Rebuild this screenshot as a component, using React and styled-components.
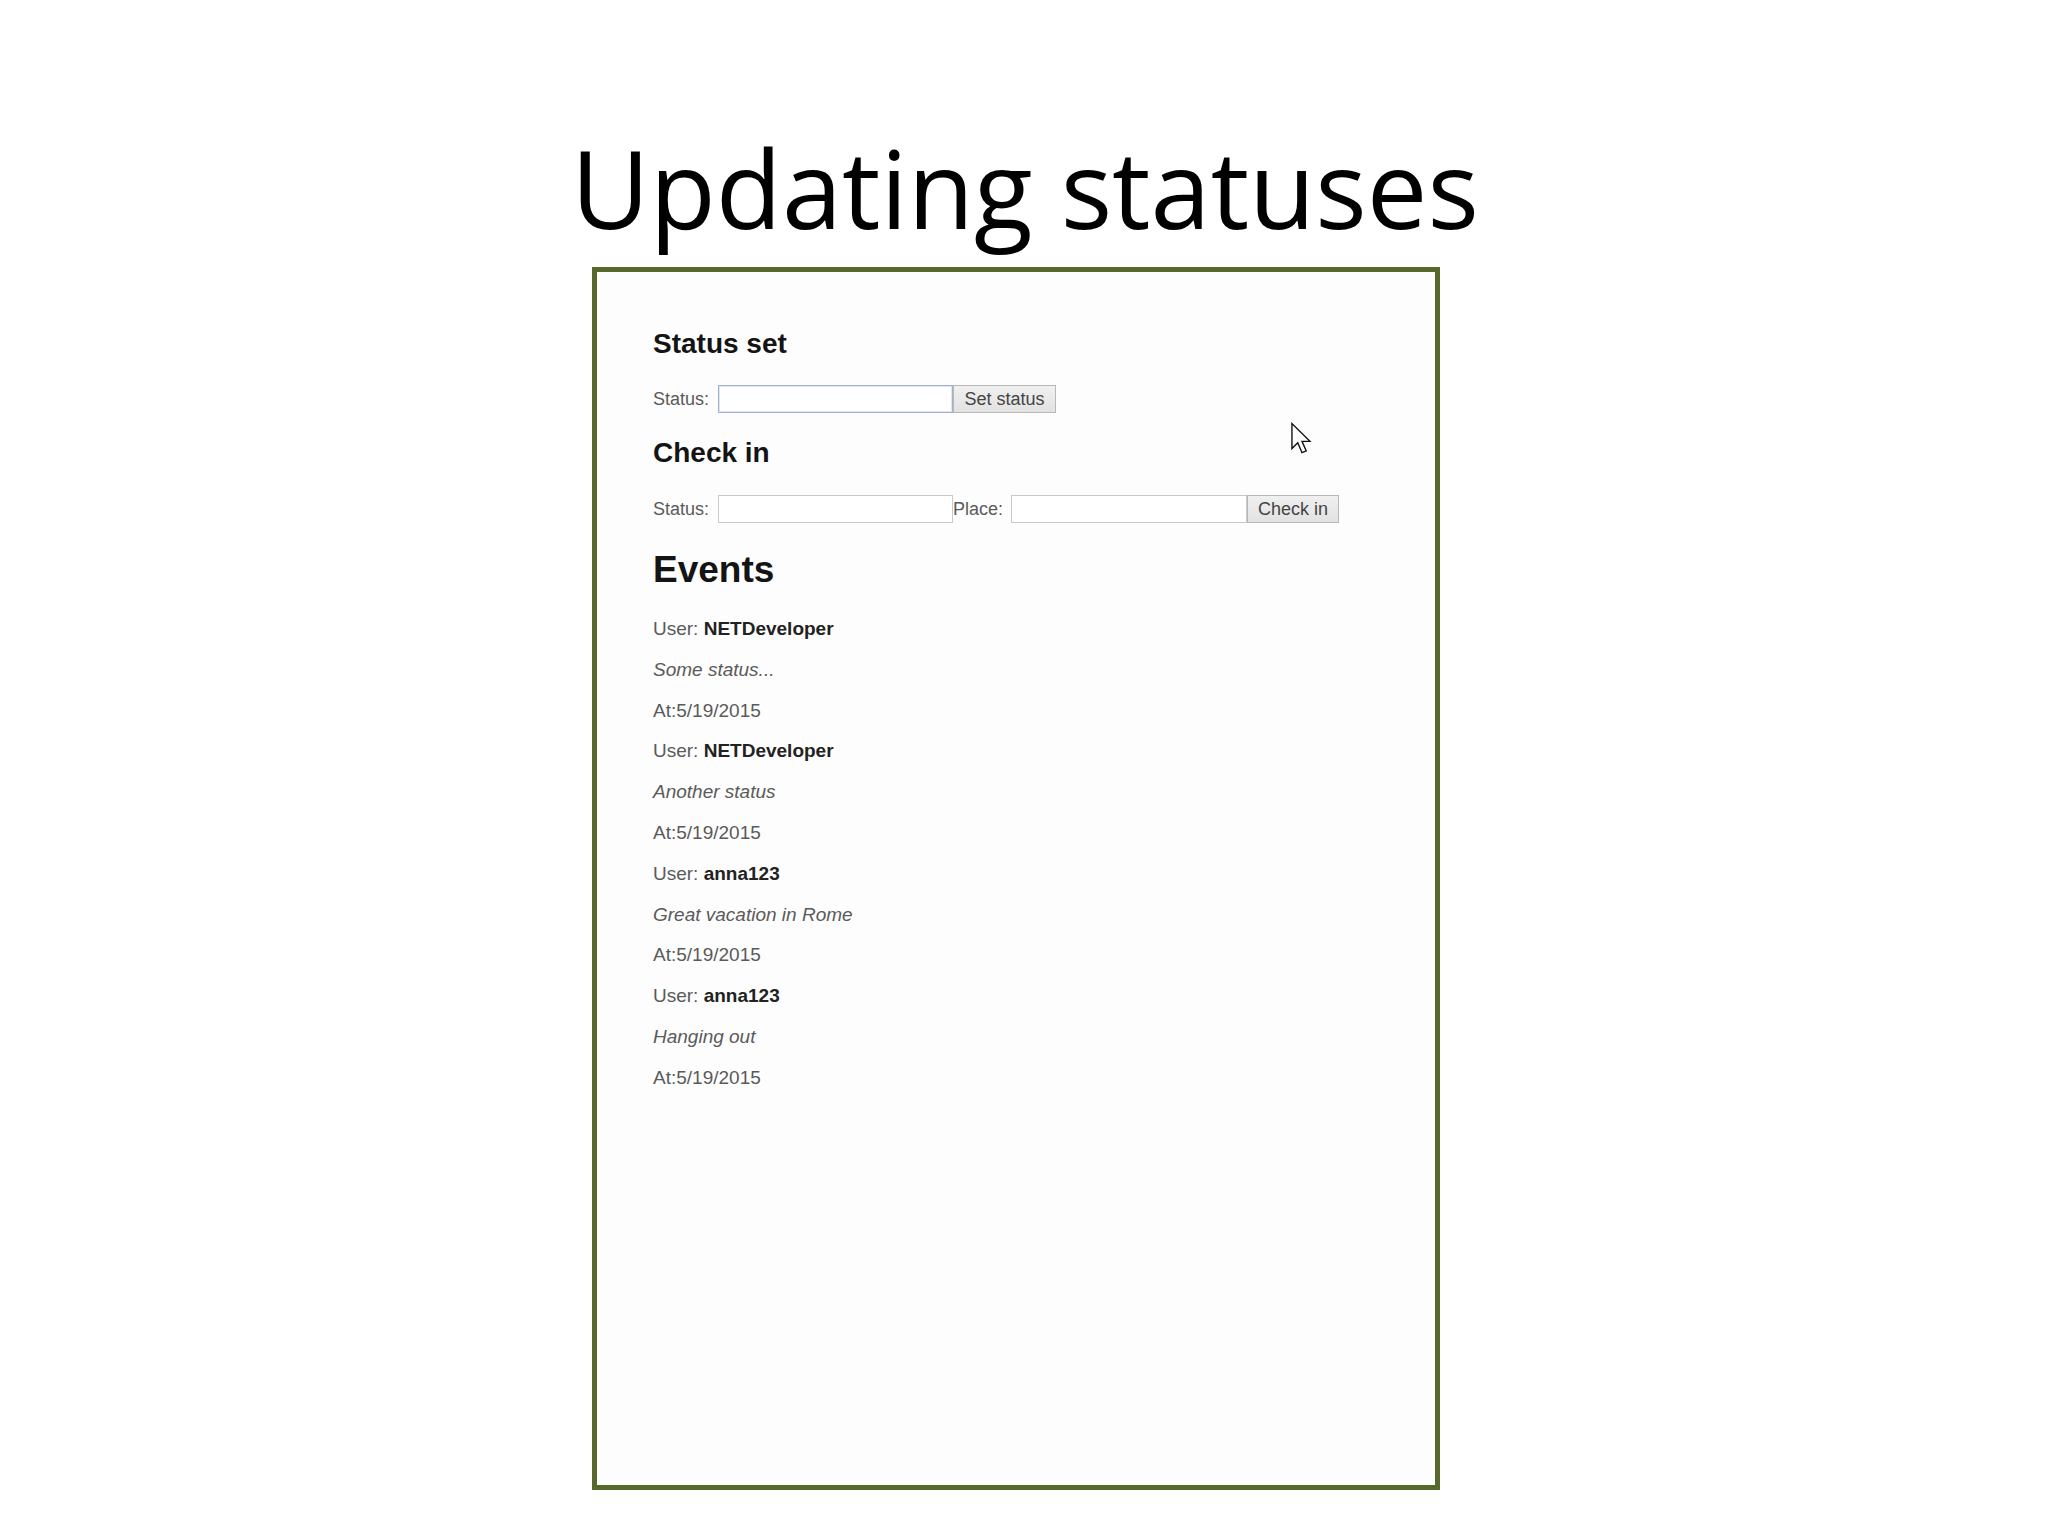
import React from "react";
import styled, { createGlobalStyle } from "styled-components";

const Global = createGlobalStyle`
  html, body { margin: 0; padding: 0; background: #ffffff; }
  #root { width: 2048px; height: 1536px; }
`;

const Slide = styled.div`
  width: 2048px;
  height: 1536px;
  background: #ffffff;
  display: flex;
  flex-direction: column;
  overflow: hidden;
`;

const Title = styled.h1`
  margin: 134px 0 0 0;
  font-family: "Open Sans", "Noto Sans", sans-serif;
  font-weight: 400;
  font-size: 108px;
  line-height: 108px;
  color: #000000;
  text-align: center;
  padding-left: 2px;
`;

const Frame = styled.div`
  position: relative;
  box-sizing: border-box;
  margin: 25px 0 0 592px;
  width: 848px;
  height: 1223px;
  border: 5px solid #56682a;
  background: #fdfdfd;
  padding: 56px 0 0 56px;
  font-family: "Liberation Sans", Arial, sans-serif;
  display: flex;
  flex-direction: column;
`;

const Heading = styled.h2`
  margin: 0;
  font-size: ${(p) => (p.$large ? "37px" : "28px")};
  line-height: ${(p) => (p.$large ? "42px" : "32px")};
  font-weight: 700;
  color: #141414;
`;

const FormRow = styled.div`
  display: flex;
  align-items: center;
  height: 28px;
  margin: ${(p) => (p.$loose ? "26px 0 26px 0" : "25px 0 24px 0")};
`;

const Label = styled.span`
  font-size: 18px;
  color: #5a5a5a;
  margin-right: ${(p) => p.$gap || 9}px;
`;

const TextInput = styled.input`
  box-sizing: border-box;
  width: ${(p) => p.$w || 235}px;
  height: 28px;
  margin: 0;
  padding: 0 4px;
  border: 1px solid ${(p) => (p.$focused ? "#9fb2d2" : "#c9c9c9")};
  box-shadow: ${(p) => (p.$focused ? "inset 0 0 0 1px #dde5f2" : "none")};
  background: #ffffff;
  outline: none;
  font-family: "Liberation Sans", Arial, sans-serif;
  font-size: 18px;
`;

const Button = styled.button`
  box-sizing: border-box;
  width: ${(p) => p.$w}px;
  height: 28px;
  margin: 0;
  padding: 0;
  border: 1px solid #b8b8b8;
  background: linear-gradient(#f0f0f0, #e2e2e2);
  color: #444444;
  font-family: "Liberation Sans", Arial, sans-serif;
  font-size: 18px;
  line-height: 26px;
`;

const EventList = styled.div`
  margin-top: 18px;
  display: flex;
  flex-direction: column;
`;

const EventLine = styled.div`
  font-size: 19px;
  line-height: 40.8px;
  color: #5a5a5a;
  font-style: ${(p) => (p.$italic ? "italic" : "normal")};
`;

const Name = styled.b`
  color: #222222;
`;

const Pointer = styled.svg`
  position: absolute;
  left: 693px;
  top: 150px;
  width: 24px;
  height: 36px;
`;

const events = [
  { user: "NETDeveloper", status: "Some status...", at: "5/19/2015" },
  { user: "NETDeveloper", status: "Another status", at: "5/19/2015" },
  { user: "anna123", status: "Great vacation in Rome", at: "5/19/2015" },
  { user: "anna123", status: "Hanging out", at: "5/19/2015" },
];

export default function App() {
  return (
    <Slide>
      <Global />
      <Title>Updating statuses</Title>
      <Frame>
        <Heading>Status set</Heading>
        <FormRow>
          <Label>Status:</Label>
          <TextInput $focused />
          <Button $w={103}>Set status</Button>
        </FormRow>
        <Heading>Check in</Heading>
        <FormRow $loose>
          <Label>Status:</Label>
          <TextInput />
          <Label $gap={8}>Place:</Label>
          <TextInput $w={236} />
          <Button $w={92}>Check in</Button>
        </FormRow>
        <Heading $large>Events</Heading>
        <EventList>
          {events.map((e, i) => (
            <React.Fragment key={i}>
              <EventLine>
                User: <Name>{e.user}</Name>
              </EventLine>
              <EventLine $italic>{e.status}</EventLine>
              <EventLine>At:{e.at}</EventLine>
            </React.Fragment>
          ))}
        </EventList>
        <Pointer viewBox="0 0 22 34">
          <path
            d="M1.5 1.5 L1.5 25 L7 19.5 L11 29 L15 27.3 L11 18.3 L18.5 18.3 Z"
            fill="#ffffff"
            stroke="#111111"
            strokeWidth="1.3"
            strokeLinejoin="miter"
          />
        </Pointer>
      </Frame>
    </Slide>
  );
}
